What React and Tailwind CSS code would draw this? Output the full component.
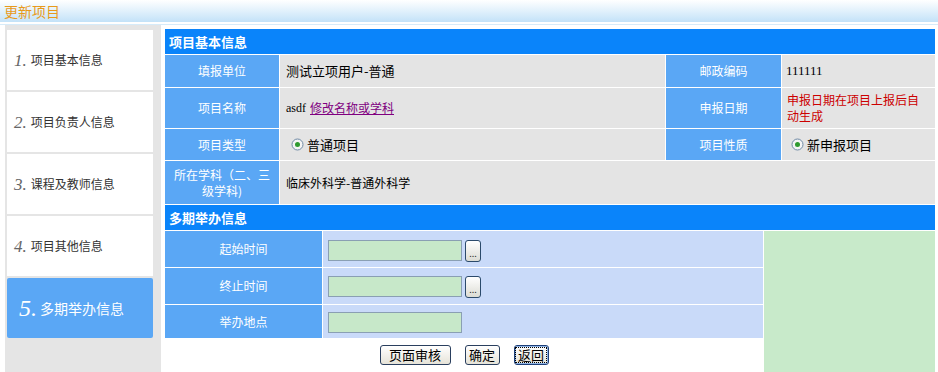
import React from "react";

const Radio = () => (
  <svg width="13" height="13" viewBox="0 0 13 13" className="shrink-0">
    <circle cx="6.5" cy="6.5" r="5.5" fill="#f4f4f4" stroke="#6f8aa5" strokeWidth="1" />
    <circle cx="6.5" cy="6.5" r="2.5" fill="#2f9a2f" />
  </svg>
);

const SideItem = ({ n, text, active }) =>
  active ? (
    <div className="h-[60px] w-[146px] bg-[#5aa7f5] rounded-[2px] flex items-center pl-[12px]">
      <span className="font-['Liberation_Serif',serif] italic text-[24px] text-white leading-none">{n}.</span>
      <span className="ml-[3px] text-[14px] text-white">{text}</span>
    </div>
  ) : (
    <div className="h-[60px] w-[146px] bg-white flex items-center pl-[7px]">
      <span className="font-['Liberation_Serif',serif] italic text-[17px] text-[#666] leading-none">{n}.</span>
      <span className="ml-[4px] text-[12px] text-[#333]">{text}</span>
    </div>
  );

const Label = ({ children, className = "" }) => (
  <div className={"bg-[#5aa7f5] text-white text-[12px] flex items-center justify-center text-center leading-[16px] " + className}>
    {children}
  </div>
);

const Value = ({ children, className = "" }) => (
  <div className={"bg-[#e4e4e4] flex items-center " + className}>{children}</div>
);

const Dots = () => (
  <div className="ml-[3px] w-[16px] h-[22px] rounded-[3px] border border-[#2b4a6b] bg-gradient-to-b from-white to-[#dcdcd4] flex items-end justify-center text-[9px] leading-[14px] text-[#333]">
    ...
  </div>
);

const Input = () => <div className="w-[134px] h-[21px] border border-[#8a9fb3] bg-[#c7e8c9]" />;

const Btn = ({ children, focus }) => (
  <div
    className={
      "h-[20px] rounded-[3px] border flex items-center justify-center text-[13px] text-black bg-gradient-to-b from-white to-[#e6e3d8] " +
      (focus ? "border-[#1d3f78] shadow-[inset_0_0_0_1px_#8fb4e6]" : "border-[#2a3f5e]")
    }
  >
    {focus ? (
      <span className="border border-dotted border-black px-[2px] leading-[14px]">{children}</span>
    ) : (
      children
    )}
  </div>
);

export default function App() {
  return (
    <div className="w-[938px] h-[372px] overflow-hidden bg-white font-['Noto_Sans_CJK_SC',sans-serif]">
      <div className="h-[22px] bg-gradient-to-b from-white to-[#c3e2f8] flex items-center pl-[4px] text-[14px] text-[#e89a1c]">
        更新项目
      </div>
      <div className="h-[2px] bg-white" />
      <div className="h-[1px] bg-[#d6ebf9]" />
      <div className="flex items-start">
        <div className="ml-[5px] w-[156px] h-[347px] bg-[#e5e5e5] pt-[5px] pl-[2px] flex flex-col gap-[2px]">
          <SideItem n="1" text="项目基本信息" />
          <SideItem n="2" text="项目负责人信息" />
          <SideItem n="3" text="课程及教师信息" />
          <SideItem n="4" text="项目其他信息" />
          <SideItem n="5" text="多期举办信息" active />
        </div>
        <div className="ml-[4px] mt-[4px] w-[770px] flex flex-col gap-px bg-white">
          <div className="h-[25px] bg-[#0a84fa] text-white font-bold text-[13px] flex items-center pl-[4px]">项目基本信息</div>
          <div className="grid grid-cols-[114px_385px_115px_153px] gap-px">
            <Label className="h-[32px]">填报单位</Label>
            <Value className="pl-[6px] text-[13px] text-black">测试立项用户-普通</Value>
            <Label>邮政编码</Label>
            <Value className="font-['Liberation_Serif',serif] text-[13px] text-black pl-[4px]">111111</Value>
            <Label className="h-[40px]">项目名称</Label>
            <Value className="pl-[6px]">
              <span className="font-['Liberation_Serif',serif] text-[12px] text-black">asdf</span>
              <span className="ml-[4px] text-[12px] text-[#800080] underline">修改名称或学科</span>
            </Value>
            <Label>申报日期</Label>
            <Value className="text-[12px] text-[#cc0000] leading-[16px] pl-[5px] pr-[10px]">
              <span>申报日期在项目上报后自动生成</span>
            </Value>
            <Label className="h-[31px]">项目类型</Label>
            <Value className="pl-[11px] text-[13px] text-black">
              <Radio />
              <span className="ml-[3px]">普通项目</span>
            </Value>
            <Label>项目性质</Label>
            <Value className="pl-[9px] text-[13px] text-black">
              <Radio />
              <span className="ml-[3px]">新申报项目</span>
            </Value>
            <Label className="h-[43px] text-[#eef6ff]">
              <span>
                所在学科（二、三
                <br />
                级学科)
              </span>
            </Label>
            <Value className="col-span-3 pl-[6px] text-[12px] text-black">临床外科学-普通外科学</Value>
          </div>
          <div className="h-[25px] bg-[#0a84fa] text-white font-bold text-[13px] flex items-center pl-[4px]">多期举办信息</div>
          <div className="flex gap-px">
            <div className="w-[598px] flex flex-col gap-px">
              <div className="flex gap-px h-[36px]">
                <Label className="w-[157px]">起始时间</Label>
                <div className="flex-1 bg-[#c9daf9] flex items-center pl-[5px] pt-[3px]">
                  <Input />
                  <Dots />
                </div>
              </div>
              <div className="flex gap-px h-[36px]">
                <Label className="w-[157px]">终止时间</Label>
                <div className="flex-1 bg-[#c9daf9] flex items-center pl-[5px] pt-[1px]">
                  <Input />
                  <Dots />
                </div>
              </div>
              <div className="flex gap-px h-[33px]">
                <Label className="w-[157px]">举办地点</Label>
                <div className="flex-1 bg-[#c9daf9] flex items-center pl-[5px] pt-[1px]">
                  <Input />
                </div>
              </div>
              <div className="h-[40px] bg-white flex justify-center gap-[14px] pt-[6px]">
                <div className="w-[71px]"><Btn>页面审核</Btn></div>
                <div className="w-[35px]"><Btn>确定</Btn></div>
                <div className="w-[35px]"><Btn focus>返回</Btn></div>
              </div>
            </div>
            <div className="flex-1 bg-[#c8eaca]" />
          </div>
        </div>
      </div>
    </div>
  );
}
